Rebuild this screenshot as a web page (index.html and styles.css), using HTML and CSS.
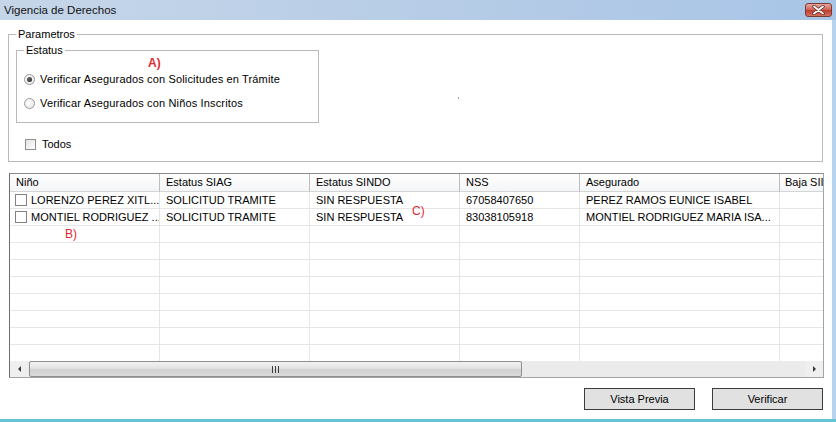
FILE: index.html
```html
<!DOCTYPE html>
<html lang="es">
<head>
    <meta charset="UTF-8">
    <title>Vigencia de Derechos</title>
    <link rel="stylesheet" href="styles.css">
</head>
<body>
    <div class="window">
        <div class="titlebar">
            <span class="title">Vigencia de Derechos</span>
            <span class="close">
                <svg width="13" height="10" viewBox="0 0 13 10">
                    <path d="M2 1.5 L11 8.5 M11 1.5 L2 8.5" stroke="#5a2a26" stroke-width="3.4" stroke-linecap="round"/>
                    <path d="M2 1.5 L11 8.5 M11 1.5 L2 8.5" stroke="#ffffff" stroke-width="1.8" stroke-linecap="round"/>
                </svg>
            </span>
        </div>

        <div class="client">
            <fieldset class="group params">
                <legend>Parametros</legend>
                <fieldset class="group estatus">
                    <legend>Estatus</legend>
                    <label class="option first"><span class="radio checked"></span>Verificar Asegurados con Solicitudes en Trámite</label>
                    <label class="option second"><span class="radio"></span>Verificar Asegurados con Niños Inscritos</label>
                </fieldset>
                <label class="option todos"><span class="check"></span>Todos</label>
            </fieldset>

            <div class="grid">
                <div class="grid-view">
                    <div class="row head">
                        <div class="cell">Niño</div>
                        <div class="cell">Estatus SIAG</div>
                        <div class="cell">Estatus SINDO</div>
                        <div class="cell">NSS</div>
                        <div class="cell">Asegurado</div>
                        <div class="cell last-col">Baja SII</div>
                    </div>
                    <div class="row">
                        <div class="cell first-col"><span class="check"></span>LORENZO PEREZ XITL...</div>
                        <div class="cell">SOLICITUD TRAMITE</div>
                        <div class="cell">SIN RESPUESTA</div>
                        <div class="cell">67058407650</div>
                        <div class="cell">PEREZ RAMOS EUNICE ISABEL</div>
                        <div class="cell"></div>
                    </div>
                    <div class="row">
                        <div class="cell first-col"><span class="check"></span>MONTIEL RODRIGUEZ ...</div>
                        <div class="cell">SOLICITUD TRAMITE</div>
                        <div class="cell">SIN RESPUESTA</div>
                        <div class="cell">83038105918</div>
                        <div class="cell">MONTIEL RODRIGUEZ MARIA ISA...</div>
                        <div class="cell"></div>
                    </div>
                    <div class="row"><div class="cell"></div><div class="cell"></div><div class="cell"></div><div class="cell"></div><div class="cell"></div><div class="cell"></div></div>
                    <div class="row"><div class="cell"></div><div class="cell"></div><div class="cell"></div><div class="cell"></div><div class="cell"></div><div class="cell"></div></div>
                    <div class="row"><div class="cell"></div><div class="cell"></div><div class="cell"></div><div class="cell"></div><div class="cell"></div><div class="cell"></div></div>
                    <div class="row"><div class="cell"></div><div class="cell"></div><div class="cell"></div><div class="cell"></div><div class="cell"></div><div class="cell"></div></div>
                    <div class="row"><div class="cell"></div><div class="cell"></div><div class="cell"></div><div class="cell"></div><div class="cell"></div><div class="cell"></div></div>
                    <div class="row"><div class="cell"></div><div class="cell"></div><div class="cell"></div><div class="cell"></div><div class="cell"></div><div class="cell"></div></div>
                    <div class="row"><div class="cell"></div><div class="cell"></div><div class="cell"></div><div class="cell"></div><div class="cell"></div><div class="cell"></div></div>
                    <div class="row last"><div class="cell"></div><div class="cell"></div><div class="cell"></div><div class="cell"></div><div class="cell"></div><div class="cell"></div></div>
                </div>
                <div class="hscroll">
                    <span class="arrow left"></span>
                    <div class="track">
                        <div class="thumb"><span class="grip"></span></div>
                    </div>
                    <span class="arrow right"></span>
                </div>
            </div>

            <div class="actions">
                <button>Vista Previa</button>
                <button>Verificar</button>
            </div>

            <!-- anotaciones rojas -->
            <span class="mark mark-a">A)</span>
            <span class="mark mark-b">B)</span>
            <span class="mark mark-c">C)</span>
            <span class="speck"></span>
        </div>
    </div>
</body>
</html>
```

FILE: styles.css
```css
body {
    margin: 0;
    font-family: "Liberation Sans", Arial, sans-serif;
    font-size: 11px;
    color: #000;
    background: #fff;
}

.window {
    width: 836px;
    height: 422px;
    box-sizing: border-box;
    display: flex;
    flex-direction: column;
    border-bottom: 3px solid #66c4d2;
}

.titlebar {
    height: 20px;
    flex: none;
    display: flex;
    align-items: center;
    justify-content: space-between;
    padding-left: 4px;
    background: linear-gradient(to right, #c6d6e9, #b4cbe6 60%, #a8c5e7);
}

.title {
    font-size: 11.5px;
    color: #111;
}

.close {
    width: 27px;
    height: 14px;
    margin-right: 4px;
    box-sizing: border-box;
    border: 1px solid #7d3a33;
    border-radius: 3px;
    background: linear-gradient(#e9a99e, #d0665a 45%, #bf3d31 55%, #d8715f);
    display: flex;
    align-items: center;
    justify-content: center;
}

.client {
    flex: 1;
    position: relative;
    display: flex;
    flex-direction: column;
    border-right: 4px solid #b6d4ef;
}

/* group boxes */
.group {
    margin: 0;
    border: 1px solid #b9b9b9;
    min-width: 0;
    box-sizing: border-box;
}

.group legend {
    padding: 0 2px;
    line-height: 13px;
}

.params {
    margin: 8px 9px 0 8px;
    height: 134px;
    padding: 3px 0 0 7px;
}

.estatus {
    width: 303px;
    height: 79px;
    padding: 14px 0 0 7px;
}

.option {
    display: flex;
    align-items: center;
    height: 16px;
    gap: 5px;
}

.estatus .option {
    letter-spacing: 0.15px;
}

.option.second {
    margin-top: 8px;
}

.option.todos {
    margin: 13px 0 0 9px;
    gap: 6px;
}

.radio {
    width: 11px;
    height: 11px;
    flex: none;
    box-sizing: border-box;
    border: 1px solid #9a9a9a;
    border-radius: 50%;
    background: radial-gradient(circle at 40% 40%, #ffffff, #e2e2e2);
    display: flex;
    align-items: center;
    justify-content: center;
}

.radio.checked::after {
    content: "";
    width: 5px;
    height: 5px;
    border-radius: 50%;
    background: radial-gradient(circle at 40% 35%, #6b6b6b, #1b1b1b);
}

.check {
    width: 11px;
    height: 11px;
    flex: none;
    box-sizing: border-box;
    border: 1px solid #8f8f8f;
    background: linear-gradient(135deg, #e4e4e4, #ffffff);
}

/* data grid */
.grid {
    margin: 11px 8px 0 9px;
    height: 205px;
    box-sizing: border-box;
    border: 1px solid #a3a3a3;
    border-left-color: #6e6e6e;
    border-top-color: #8a8a8a;
    display: flex;
    flex-direction: column;
    background: #fff;
}

.grid-view {
    flex: 1;
    overflow: hidden;
}

.row {
    display: grid;
    grid-template-columns: 150px 150px 150px 120px 200px 100px;
    height: 17px;
}

.row.head {
    height: 18px;
}

.cell {
    box-sizing: border-box;
    padding-left: 6px;
    border-right: 1px solid #e6e6e6;
    border-bottom: 1px solid #e6e6e6;
    white-space: nowrap;
    overflow: hidden;
    line-height: 16px;
}

.row.head .cell {
    line-height: 17px;
    background: linear-gradient(#ffffff, #f4f5f7);
    border-right-color: #bdbdbd;
    border-bottom-color: #d5d5d5;
}

.row.head .last-col {
    padding-left: 5px;
}

.row.last .cell {
    border-bottom: none;
}

.first-col {
    display: flex;
    align-items: center;
    gap: 4px;
    padding-left: 5px;
}

.first-col .check {
    width: 12px;
    height: 12px;
    border-color: #828282;
    background: #fff;
}

.hscroll {
    height: 16px;
    flex: none;
    display: flex;
    background: #ebebeb;
}

.arrow {
    width: 18px;
    flex: none;
    display: flex;
    align-items: center;
    justify-content: center;
    background: #efefef;
}

.arrow::after {
    content: "";
    border-top: 3px solid transparent;
    border-bottom: 3px solid transparent;
}

.arrow.left::after {
    border-right: 3px solid #3a3a3a;
}

.arrow.right::after {
    border-left: 3px solid #3a3a3a;
}

.track {
    flex: 1;
    padding: 0 1px;
}

.thumb {
    width: 493px;
    height: 16px;
    box-sizing: border-box;
    border: 1px solid #8f8f8f;
    border-radius: 2px;
    background: linear-gradient(#f2f2f2, #e3e3e3 45%, #d0d0d0 55%, #dadada);
    display: flex;
    align-items: center;
    justify-content: center;
}

.grip {
    width: 7px;
    height: 7px;
    background: repeating-linear-gradient(to right, #3f3f3f 0 1px, transparent 1px 3px);
}

.actions {
    display: flex;
    justify-content: flex-end;
    gap: 17px;
    margin: 10px 9px 0 0;
}

.actions button {
    width: 111px;
    height: 22px;
    padding: 0;
    border: 1px solid #3b3b3b;
    background: #e1e1e1;
    font-family: "Liberation Sans", Arial, sans-serif;
    font-size: 11px;
    color: #000;
}

.mark {
    position: absolute;
    color: #df2a33;
    font-size: 12px;
    line-height: 14px;
}

.mark-a {
    left: 148px;
    top: 36px;
    font-weight: bold;
}

.mark-b {
    left: 65px;
    top: 207px;
}

.mark-c {
    left: 412px;
    top: 184px;
}

.speck {
    position: absolute;
    left: 458px;
    top: 77px;
    width: 1px;
    height: 2px;
    background: #b0b0b0;
}
```
